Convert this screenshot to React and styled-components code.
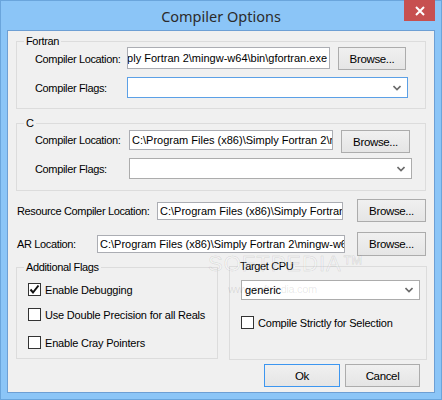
import React from 'react'
import styled, { createGlobalStyle } from 'styled-components'

const Global = createGlobalStyle`
  html, body { margin: 0; padding: 0; background: #fff; }
  * { box-sizing: border-box; }
`

const Window = styled.div`
  width: 442px;
  height: 400px;
  background: #8bc5f7;
  border: 1px solid #6aa5dc;
  display: flex;
  flex-direction: column;
  font-family: "Liberation Sans", Arial, sans-serif;
  font-size: 11px;
  letter-spacing: -0.35px;
  color: #000;
  position: relative;
`

const TitleBar = styled.div`
  height: 30px;
  position: relative;
  display: flex;
  align-items: center;
  justify-content: center;
  font-family: "Noto Sans", "Open Sans", sans-serif;
  font-size: 14.5px;
  letter-spacing: 0;
  color: #2b2b2b;
  padding-bottom: 1px;
`

const CloseBtn = styled.div`
  position: absolute;
  top: -1px;
  right: 6px;
  width: 31px;
  height: 21px;
  background: #c75050;
  display: flex;
  align-items: center;
  justify-content: center;
`

const Client = styled.div`
  margin: 0 7px 0 7px;
  height: 361px;
  background: #f0f0f0;
  box-shadow: 0 0 0 1px #6d9fd4;
  display: flex;
  flex-direction: column;
  padding: 10px 8px 0 8px;
  position: relative;
`

const Group = styled.div`
  position: relative;
  border: 1px solid #dcdcdc;
  width: ${p => p.w}px;
  height: ${p => p.h}px;
  margin-top: ${p => p.mt || 0}px;
  margin-left: ${p => p.ml || 0}px;
  padding: ${p => p.pad};
  display: flex;
  flex-direction: column;
  flex-shrink: 0;
`

const Legend = styled.span`
  position: absolute;
  top: -8px;
  left: ${p => p.left || 7}px;
  background: #f0f0f0;
  padding: 0 2px;
  line-height: 14px;
`

const Row = styled.div`
  display: flex;
  align-items: ${p => p.align || 'center'};
  margin-top: ${p => p.mt || 0}px;
  padding-left: ${p => p.pl || 0}px;
  flex-shrink: 0;
`

const Label = styled.span`
  width: ${p => p.w}px;
  flex-shrink: 0;
  padding-top: ${p => p.pt || 0}px;
  white-space: nowrap;
`

const TextBox = styled.div`
  width: ${p => p.w}px;
  height: ${p => p.h}px;
  flex-shrink: 0;
  background: #fff;
  border: 1px solid #abadb3;
  display: flex;
  align-items: center;
  justify-content: ${p => (p.end ? 'flex-end' : 'flex-start')};
  overflow: hidden;
  white-space: nowrap;
  padding: 0 2px;
  letter-spacing: 0;
`

const Combo = styled.div`
  width: ${p => p.w}px;
  height: ${p => p.h || 21}px;
  background: #fff;
  border: 1px solid ${p => (p.focus ? '#5ca0e6' : '#acacac')};
  display: flex;
  align-items: center;
  justify-content: space-between;
  padding: 0 6px 0 3px;
  flex-shrink: 0;
  letter-spacing: 0;
`

const Button = styled.div`
  width: ${p => p.w}px;
  height: ${p => p.h || 23}px;
  flex-shrink: 0;
  border: 1px solid ${p => (p.primary ? '#3c96f0' : '#acacac')};
  background: linear-gradient(#f0f0f0, #e5e5e5);
  display: flex;
  align-items: center;
  justify-content: center;
  margin-left: ${p => p.ml || 0}px;
  font-size: 11.5px;
`

const Check = styled.div`
  display: flex;
  align-items: center;
  margin-top: ${p => p.mt || 0}px;
  white-space: nowrap;
  letter-spacing: -0.2px;
`

const Box = styled.div`
  width: 13px;
  height: 13px;
  border: 1px solid #333;
  background: #fff;
  margin-right: 4px;
  display: flex;
  align-items: center;
  justify-content: center;
`

const Columns = styled.div`
  display: flex;
  align-items: flex-start;
  margin-top: 11px;
`

const Footer = styled.div`
  display: flex;
  justify-content: flex-end;
  margin-top: 4px;
  padding-right: 6px;
`

const Watermark = styled.div`
  position: absolute;
  left: 200px;
  top: 222px;
  font-family: "Liberation Sans", Arial, sans-serif;
  font-size: 22px;
  letter-spacing: 1px;
  color: rgba(255, 255, 255, 0.25);
  -webkit-text-stroke: 1px rgba(0, 0, 0, 0.08);
  pointer-events: none;
  line-height: 1;
`

const WatermarkUrl = styled.div`
  position: absolute;
  left: 220px;
  top: 252px;
  font-size: 11px;
  color: rgba(0, 0, 0, 0.1);
  pointer-events: none;
`

const Chevron = () => (
  <svg width="8" height="6" viewBox="0 0 8 6">
    <polyline points="0.5,1 4,4.5 7.5,1" fill="none" stroke="#6a6a6a" strokeWidth="1.6" />
  </svg>
)

const Tick = () => (
  <svg width="11" height="11" viewBox="0 0 11 11">
    <polyline points="1.5,5.5 4,8.5 9.5,1.5" fill="none" stroke="#111" strokeWidth="2" />
  </svg>
)

function CheckItem({ checked, mt, children }) {
  return (
    <Check mt={mt}>
      <Box>{checked && <Tick />}</Box>
      {children}
    </Check>
  )
}

export default function App() {
  return (
    <>
      <Global />
      <Window>
        <TitleBar>
          Compiler Options
          <CloseBtn>
            <svg width="10" height="10" viewBox="0 0 10 10">
              <path d="M1 1 L9 9 M9 1 L1 9" stroke="#fff" strokeWidth="2" />
            </svg>
          </CloseBtn>
        </TitleBar>
        <Client>
          <Group w={410} h={68} pad="5px 0 0 18px">
            <Legend>Fortran</Legend>
            <Row align="flex-start">
              <Label w={92} pt={6}>Compiler Location:</Label>
              <TextBox w={203} h={22} end>C:\Program Files (x86)\Simply Fortran 2\mingw-w64\bin\gfortran.exe</TextBox>
              <Button w={68} ml={8}>Browse...</Button>
            </Row>
            <Row mt={7}>
              <Label w={92}>Compiler Flags:</Label>
              <Combo w={281} focus>
                <span />
                <Chevron />
              </Combo>
            </Row>
          </Group>

          <Group w={410} h={68} mt={14} pad="6px 0 0 18px">
            <Legend>C</Legend>
            <Row align="flex-start">
              <Label w={94} pt={4}>Compiler Location:</Label>
              <TextBox w={204} h={20}>C:\Program Files (x86)\Simply Fortran 2\mingw-w64\bin\gcc.exe</TextBox>
              <Button w={69} ml={8}>Browse...</Button>
            </Row>
            <Row mt={5}>
              <Label w={94}>Compiler Flags:</Label>
              <Combo w={283}>
                <span />
                <Chevron />
              </Combo>
            </Row>
          </Group>

          <Row mt={8} pl={1}>
            <Label w={140}>Resource Compiler Location:</Label>
            <TextBox w={186} h={18}>C:\Program Files (x86)\Simply Fortran 2\mingw-w64\bin\windres.exe</TextBox>
            <Button w={69} ml={14}>Browse...</Button>
          </Row>

          <Row mt={10} pl={1}>
            <Label w={80}>AR Location:</Label>
            <TextBox w={248} h={18}>C:\Program Files (x86)\Simply Fortran 2\mingw-w64\bin\ar.exe</TextBox>
            <Button w={69} h={24} ml={12}>Browse...</Button>
          </Row>

          <Columns>
            <Group w={202} h={92} pad="15px 0 0 11px">
              <Legend>Additional Flags</Legend>
              <CheckItem checked>Enable Debugging</CheckItem>
              <CheckItem mt={12}>Use Double Precision for all Reals</CheckItem>
              <CheckItem mt={15}>Enable Cray Pointers</CheckItem>
            </Group>
            <Group w={198} h={94} ml={11} mt={-1} pad="13px 0 0 11px">
              <Legend left={8}>Target CPU</Legend>
              <Combo w={179} h={20}>
                <span>generic</span>
                <Chevron />
              </Combo>
              <CheckItem mt={16}>Compile Strictly for Selection</CheckItem>
            </Group>
          </Columns>

          <Footer>
            <Button w={76} primary>Ok</Button>
            <Button w={75} ml={5}>Cancel</Button>
          </Footer>

          <Watermark>SOFTPEDIA™</Watermark>
          <WatermarkUrl>www.softpedia.com</WatermarkUrl>
        </Client>
      </Window>
    </>
  )
}
